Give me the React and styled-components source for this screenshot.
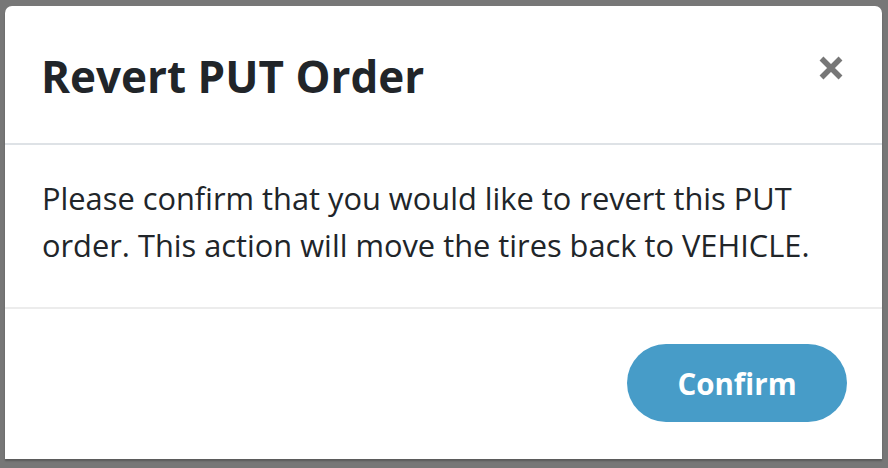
import styled, { createGlobalStyle } from 'styled-components';

const GlobalStyle = createGlobalStyle`
  html, body {
    margin: 0;
    padding: 0;
    background-color: #777777;
  }
  body {
    font-family: 'Open Sans', 'Noto Sans', sans-serif;
    color: #212529;
  }
`;

const Backdrop = styled.div`
  width: 888px;
  height: 468px;
  box-sizing: border-box;
  padding: 6px 6px 9px 5px;
`;

const Modal = styled.div`
  display: flex;
  flex-direction: column;
  height: 100%;
  background-color: #ffffff;
  border-radius: 7px 7px 0 0;
  box-shadow: 0 2px 2px rgba(0, 0, 0, 0.25);
`;

const Header = styled.div`
  display: flex;
  align-items: center;
  justify-content: space-between;
  height: 139px;
  padding: 3px 36px 0 36px;
  box-sizing: border-box;
  border-bottom: 2px solid #dee2e6;
`;

const Title = styled.h2`
  margin: 0;
  font-size: 44px;
  font-weight: 700;
  color: #212529;
`;

const CloseButton = styled.button`
  display: flex;
  align-items: center;
  justify-content: center;
  width: 30px;
  height: 30px;
  margin-bottom: 17px;
  padding: 0;
  border: none;
  background: transparent;
  cursor: pointer;
`;

const Body = styled.div`
  height: 164px;
  box-sizing: border-box;
  padding: 30px 37px 0;
  font-size: 30.8px;
  line-height: 47px;
  border-bottom: 2px solid #ececec;
`;

const Footer = styled.div`
  flex: 1;
  display: flex;
  align-items: center;
  justify-content: flex-end;
  padding: 0 35px 2px;
`;

const ConfirmButton = styled.button`
  width: 220px;
  height: 78px;
  border: none;
  border-radius: 39px;
  background-color: #479cc8;
  color: #ffffff;
  font-family: 'Open Sans', 'Noto Sans', sans-serif;
  font-size: 29.5px;
  font-weight: 700;
  cursor: pointer;
`;

const CloseIcon = () => (
    <svg width="24" height="24" viewBox="0 0 24 24">
        <path d="M2.5 2.5 L21.5 21.5 M21.5 2.5 L2.5 21.5" stroke="#777777" strokeWidth="5.5" />
    </svg>
);

export default function App() {
    return (
        <>
            <GlobalStyle />
            <Backdrop>
                <Modal>
                    <Header>
                        <Title>Revert PUT Order</Title>
                        <CloseButton aria-label="Close">
                            <CloseIcon />
                        </CloseButton>
                    </Header>
                    <Body>
                        Please confirm that you would like to revert this PUT
                        order. This action will move the tires back to VEHICLE.
                    </Body>
                    <Footer>
                        <ConfirmButton>Confirm</ConfirmButton>
                    </Footer>
                </Modal>
            </Backdrop>
        </>
    );
}
